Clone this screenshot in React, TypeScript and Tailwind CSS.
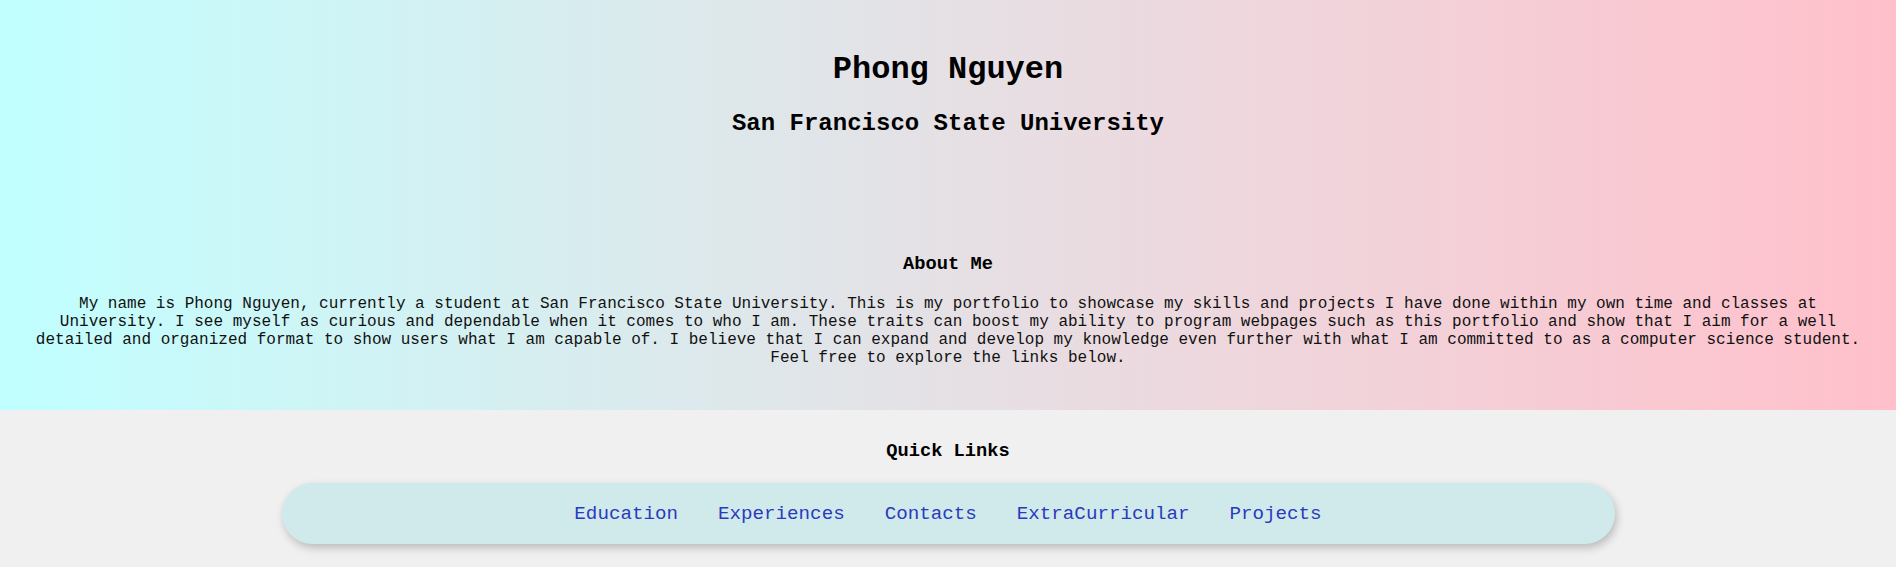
const links = ["Education", "Experiences", "Contacts", "ExtraCurricular", "Projects"];

function App() {
   return (
      <div className="min-h-[567px] bg-[#f0f0f0] text-black font-['Liberation_Mono','Courier_New',monospace]">
         <header className="h-[410px] bg-gradient-to-r from-[#c0ffff] to-[#ffc0cb] px-7 pt-[52px] text-center">
            <h1 className="text-[32px] leading-[36px] font-bold">Phong Nguyen</h1>
            <h2 className="mt-[22px] text-[24px] leading-[27px] font-bold">San Francisco State University</h2>

            <section className="mt-[117px]">
               <h3 className="text-[18.72px] leading-[21px] font-bold">About Me</h3>
               <p className="mt-[20px] text-[16px] leading-[18px] text-[#111]">
                  My name is Phong Nguyen, currently a student at San Francisco State University. This is my portfolio
                  to showcase my skills and projects I have done within my own time and classes at University. I see
                  myself as curious and dependable when it comes to who I am. These traits can boost my ability to
                  program webpages such as this portfolio and show that I aim for a well detailed and organized format
                  to show users what I am capable of. I believe that I can expand and develop my knowledge even further
                  with what I am committed to as a computer science student. Feel free to explore the links below.
               </p>
            </section>
         </header>

         <section className="pt-[31px] pb-6 text-center">
            <h3 className="text-[18.72px] leading-[21px] font-bold">Quick Links</h3>
            <nav className="mx-auto mt-[21px] flex h-[61px] w-[1333px] items-center justify-center gap-10 rounded-[31px] bg-[#d0e9ea] shadow-[2px_4px_8px_rgba(0,0,0,0.22)]">
               {links.map((link) => (
                  <a key={link} href="#" className="text-[19.2px] leading-[22px] text-[#2a3ac0]">
                     {link}
                  </a>
               ))}
            </nav>
         </section>
      </div>
   );
}

export default App;
